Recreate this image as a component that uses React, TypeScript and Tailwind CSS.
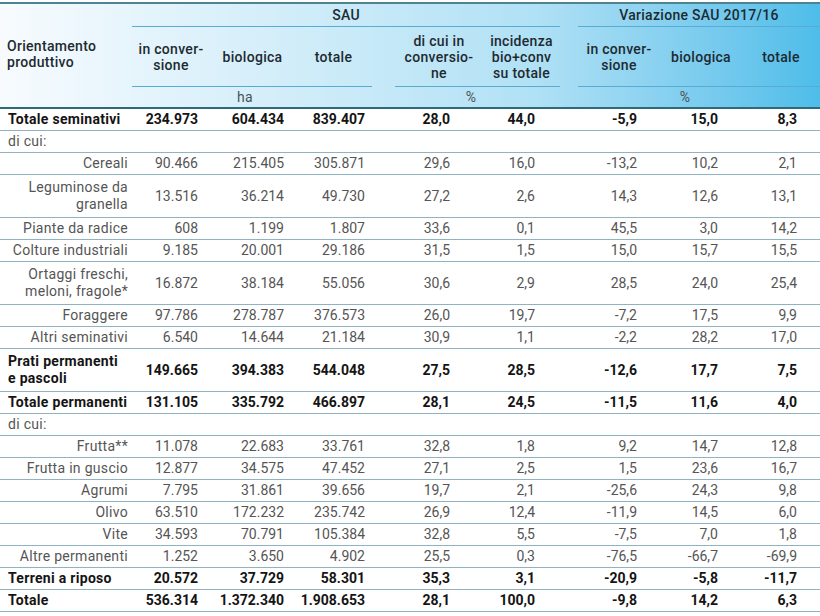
import React from "react";

type Row = {
  label: string;
  kind: "bold" | "sub" | "note";
  values?: string[];
  tall?: boolean;
};

const rows: Row[] = [
  { label: "Totale seminativi", kind: "bold", values: ["234.973", "604.434", "839.407", "28,0", "44,0", "-5,9", "15,0", "8,3"] },
  { label: "di cui:", kind: "note" },
  { label: "Cereali", kind: "sub", values: ["90.466", "215.405", "305.871", "29,6", "16,0", "-13,2", "10,2", "2,1"] },
  { label: "Leguminose da\ngranella", kind: "sub", tall: true, values: ["13.516", "36.214", "49.730", "27,2", "2,6", "14,3", "12,6", "13,1"] },
  { label: "Piante da radice", kind: "sub", values: ["608", "1.199", "1.807", "33,6", "0,1", "45,5", "3,0", "14,2"] },
  { label: "Colture industriali", kind: "sub", values: ["9.185", "20.001", "29.186", "31,5", "1,5", "15,0", "15,7", "15,5"] },
  { label: "Ortaggi freschi,\nmeloni, fragole*", kind: "sub", tall: true, values: ["16.872", "38.184", "55.056", "30,6", "2,9", "28,5", "24,0", "25,4"] },
  { label: "Foraggere", kind: "sub", values: ["97.786", "278.787", "376.573", "26,0", "19,7", "-7,2", "17,5", "9,9"] },
  { label: "Altri seminativi", kind: "sub", values: ["6.540", "14.644", "21.184", "30,9", "1,1", "-2,2", "28,2", "17,0"] },
  { label: "Prati permanenti\ne pascoli", kind: "bold", tall: true, values: ["149.665", "394.383", "544.048", "27,5", "28,5", "-12,6", "17,7", "7,5"] },
  { label: "Totale permanenti", kind: "bold", values: ["131.105", "335.792", "466.897", "28,1", "24,5", "-11,5", "11,6", "4,0"] },
  { label: "di cui:", kind: "note" },
  { label: "Frutta**", kind: "sub", values: ["11.078", "22.683", "33.761", "32,8", "1,8", "9,2", "14,7", "12,8"] },
  { label: "Frutta in guscio", kind: "sub", values: ["12.877", "34.575", "47.452", "27,1", "2,5", "1,5", "23,6", "16,7"] },
  { label: "Agrumi", kind: "sub", values: ["7.795", "31.861", "39.656", "19,7", "2,1", "-25,6", "24,3", "9,8"] },
  { label: "Olivo", kind: "sub", values: ["63.510", "172.232", "235.742", "26,9", "12,4", "-11,9", "14,5", "6,0"] },
  { label: "Vite", kind: "sub", values: ["34.593", "70.791", "105.384", "32,8", "5,5", "-7,5", "7,0", "1,8"] },
  { label: "Altre permanenti", kind: "sub", values: ["1.252", "3.650", "4.902", "25,5", "0,3", "-76,5", "-66,7", "-69,9"] },
  { label: "Terreni a riposo", kind: "bold", values: ["20.572", "37.729", "58.301", "35,3", "3,1", "-20,9", "-5,8", "-11,7"] },
  { label: "Totale", kind: "bold", values: ["536.314", "1.372.340", "1.908.653", "28,1", "100,0", "-9,8", "14,2", "6,3"] },
];

const grid = "grid grid-cols-[132px_78px_85px_77px_23px_88px_77px_18px_82px_82px_78px]";
const pads = ["pr-[12px]", "pr-[11px]", "pr-[7px]", "pr-[33px]", "pr-[25px]", "pr-[23px]", "pr-[24px]", "pr-[23px]"];

const Header = () => (
  <div className="pt-[2px] bg-white">
    <div
      className={`${grid} grid-rows-[23px_60px_20px] border-t-2 border-b-2 border-t-[#4f8393] border-b-[#2f6a7b] bg-linear-to-r from-[#f7fbfe] via-[#b1e1f5] via-65% to-[#4dbde9] text-[14px] leading-[16px] tracking-[0.3px] text-[#1e2a31]`}
    >
      <div className="col-start-1 row-start-1 row-span-3 flex items-center pl-[7px] pb-[4px] font-medium">
        Orientamento
        <br />
        produttivo
      </div>
      <div className="col-start-2 col-span-6 row-start-1 flex items-end justify-center pb-[3px] border-b border-[#58abd2] font-medium">
        SAU
      </div>
      <div className="col-start-9 col-span-3 row-start-1 flex items-end justify-center pb-[3px] border-b border-[#58abd2] font-medium">
        Variazione SAU 2017/16
      </div>

      <div className="col-start-2 row-start-2 flex items-center justify-center text-center border-b border-[#58abd2] font-medium">
        in conver-<br />sione
      </div>
      <div className="col-start-3 row-start-2 flex items-center justify-center border-b border-[#58abd2] font-medium">biologica</div>
      <div className="col-start-4 row-start-2 flex items-center justify-center border-b border-[#58abd2] font-medium">totale</div>
      <div className="col-start-6 row-start-2 flex items-center justify-center text-center border-b border-[#58abd2] font-medium">
        di cui in<br />conversio-<br />ne
      </div>
      <div className="col-start-7 row-start-2 flex items-center justify-center text-center border-b border-[#58abd2] font-medium">
        incidenza<br />bio+conv<br />su totale
      </div>
      <div className="col-start-9 row-start-2 flex items-center justify-center text-center border-b border-[#58abd2] font-medium">
        in conver-<br />sione
      </div>
      <div className="col-start-10 row-start-2 flex items-center justify-center border-b border-[#58abd2] font-medium">biologica</div>
      <div className="col-start-11 row-start-2 flex items-center justify-center border-b border-[#58abd2] font-medium">totale</div>

      <div className="col-start-2 col-span-3 row-start-3 flex items-center justify-center pr-[14px] text-[#4a5257]">ha</div>
      <div className="col-start-6 col-span-2 row-start-3 flex items-center justify-center pr-[13px] text-[#4a5257]">%</div>
      <div className="col-start-9 col-span-3 row-start-3 flex items-center justify-center pr-[28px] text-[#4a5257]">%</div>
    </div>
  </div>
);

const DataRow = ({ row }: { row: Row }) => {
  const bold = row.kind === "bold";
  const vals = row.values ?? ["", "", "", "", "", "", "", ""];
  const cells: React.ReactNode[] = [];
  vals.forEach((v, i) => {
    cells.push(
      <div key={`v${i}`} className={`text-right ${pads[i]}`}>
        {v}
      </div>
    );
    if (i === 2 || i === 4) cells.push(<div key={`s${i}`} />);
  });
  return (
    <div
      className={`${grid} items-center border-b border-[#8fb3c2] ${row.tall ? "h-[43px]" : "h-[22px]"} ${
        bold ? "font-bold text-[#141414]" : "text-[#555555]"
      }`}
    >
      <div
        className={`whitespace-pre-line leading-[17px] tracking-[0.3px] ${
          row.kind === "sub" ? "text-right pr-[4px]" : "text-left pl-[8px]"
        }`}
      >
        {row.label}
      </div>
      {cells}
    </div>
  );
};

export default function App() {
  return (
    <div className="w-[820px] h-[616px] overflow-hidden bg-white text-[14px] font-['Roboto',sans-serif]">
      <Header />
      {rows.map((r, i) => (
        <DataRow key={i} row={r} />
      ))}
    </div>
  );
}
